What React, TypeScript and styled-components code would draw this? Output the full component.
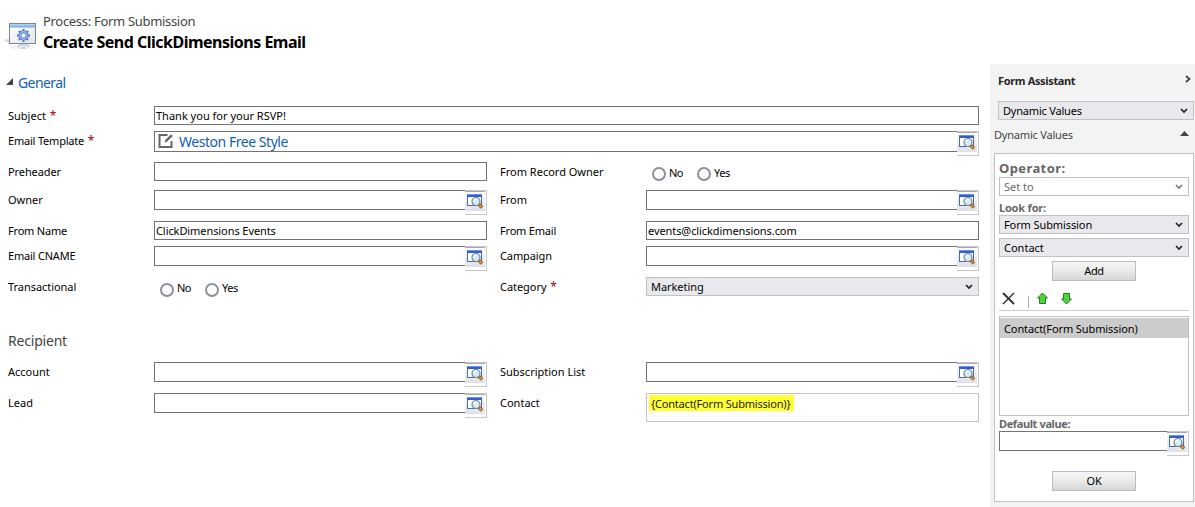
import React from "react";
import styled, { createGlobalStyle } from "styled-components";

const Global = createGlobalStyle`
  *, *::before, *::after { box-sizing: border-box; }
  html, body { margin: 0; padding: 0; background: #fff; overflow: hidden; }
  body { font-family: "Noto Sans", "Open Sans", sans-serif; font-size: 11px; color: #000; }
`;

const Page = styled.div`
  width: 1195px;
  height: 507px;
  display: flex;
  align-items: flex-start;
  overflow: hidden;
`;

const Main = styled.main`
  width: 990px;
  height: 507px;
  display: flex;
  flex-direction: column;
`;

const Header = styled.header`
  display: flex;
  gap: 4px;
  height: 64px;
  padding: 12px 0 0 4px;
`;

const HeaderIcon = styled.svg`
  width: 35px;
  height: 32px;
  margin-top: 9px;
`;

const Titles = styled.div`
  display: flex;
  flex-direction: column;
  white-space: nowrap;
`;

const Crumb = styled.div`
  font-size: 13px;
  line-height: 18px;
  letter-spacing: -0.31px;
  color: #444;
`;

const Title = styled.h1`
  margin: 0;
  font-size: 16px;
  line-height: 24px;
  font-weight: 700;
  letter-spacing: -0.5px;
  color: #000;
`;

const SectionHead = styled.div`
  display: flex;
  align-items: center;
  gap: 5px;
  height: 42px;
  padding: 0 0 6px 6px;
  font-size: 14px;
  letter-spacing: -0.6px;
  color: #1160b7;

  svg { margin-top: -2px; }
`;

const Recipient = styled.h2`
  margin: 0;
  height: 54px;
  padding: 23px 0 0 8px;
  font-size: 14px;
  line-height: 20px;
  font-weight: 400;
  letter-spacing: -0.2px;
  color: #444;
`;

const Row = styled.div<{ $h: number }>`
  display: flex;
  align-items: flex-start;
  height: ${(p) => p.$h}px;
  padding-left: 8px;
`;

const Label = styled.label<{ $ls?: number }>`
  flex: none;
  width: 146px;
  line-height: 20px;
  white-space: nowrap;
  letter-spacing: ${(p) => p.$ls ?? 0}px;
`;

const Star = styled.span`
  margin-left: 1px;
  font-size: 12px;
  line-height: 10px;
  color: #a00000;
`;

const Gap = styled.div`
  flex: none;
  width: 13px;
`;

const Box = styled.div<{ $w?: number; $ls?: number }>`
  flex: none;
  width: ${(p) => p.$w ?? 333}px;
  height: 19px;
  padding-left: 1px;
  border: 1px solid #737373;
  background: #fff;
  line-height: 18px;
  white-space: nowrap;
  letter-spacing: ${(p) => p.$ls ?? 0}px;
`;

const LookupWrap = styled.div<{ $w: number }>`
  flex: none;
  display: flex;
  align-items: flex-start;
  width: ${(p) => p.$w}px;
`;

const LookupInput = styled.div<{ $h: number }>`
  flex: 1;
  height: ${(p) => p.$h}px;
  display: flex;
  align-items: center;
  gap: 5px;
  padding-left: 3px;
  border: 1px solid #737373;
  border-right: 0;
  background: #fff;
  font-size: 14px;
  letter-spacing: -0.46px;
  color: #1160b7;
  white-space: nowrap;
`;

const LookupButton = styled.div`
  flex: none;
  width: 22px;
  height: 25px;
  padding: 0 1px 3px 0;
  border: 1px solid #c8c8c8;
  border-left: 0;
  background: #fff;

  > div {
    height: 20px;
    padding: 1px 0 0 2px;
    border-top: 1px solid #a8a8ac;
    background: linear-gradient(#fcfcff, #dfe0ea);
  }
  svg { display: block; }
`;

const ContactBox = styled.div`
  width: 333px;
  height: 29px;
  padding: 1px 2px;
  border: 1px solid #c4c4c8;

  span {
    display: block;
    width: 145px;
    height: 16px;
    padding-left: 2px;
    line-height: 17px;
    letter-spacing: -0.19px;
    white-space: nowrap;
    background: #ffff33;
    color: #222;
  }
`;

const Radios = styled.div<{ $top: number }>`
  display: flex;
  padding: ${(p) => p.$top}px 0 0 6px;
`;

const Radio = styled.div<{ $up: number }>`
  display: flex;
  gap: 3px;
  width: 45px;

  i {
    width: 14px;
    height: 14px;
    border: 2px solid #8f8f9d;
    border-radius: 50%;
  }
  span { margin-top: ${(p) => -p.$up}px; line-height: 14px; letter-spacing: -0.5px; }
`;

const SelectBox = styled.div<{ $plain?: boolean; $ls?: number }>`
  flex: none;
  display: flex;
  justify-content: space-between;
  align-items: center;
  height: 19px;
  padding: 0 5px 0 4px;
  border: 1px solid #c2c2c6;
  background: ${(p) => (p.$plain ? "#fff" : "#e9e9ed")};
  color: ${(p) => (p.$plain ? "#6d6d6d" : "#000")};
  line-height: 17px;
  white-space: nowrap;
  letter-spacing: ${(p) => p.$ls ?? 0}px;
`;

const WideSelect = styled(SelectBox)`
  width: 333px;
`;

const Aside = styled.aside`
  width: 205px;
  height: 443px;
  margin-top: 64px;
  padding: 0 1px 0 4px;
  background: #f3f3f3;
`;

const AsideTitle = styled.div`
  display: flex;
  justify-content: space-between;
  height: 37px;
  padding: 7px 3px 0 4px;
  font-weight: 700;
  line-height: 20px;
  letter-spacing: -0.35px;
  color: #262626;

  svg { margin-top: 4px; }
`;

const AsideSelect = styled(SelectBox)`
  margin-left: 4px;
`;

const AsideSub = styled.div`
  display: flex;
  justify-content: space-between;
  height: 33px;
  padding: 5px 5px 0 0;
  line-height: 20px;
  letter-spacing: -0.2px;
  color: #444;

  svg { margin-top: 6px; }
`;

const Panel = styled.div`
  display: flex;
  flex-direction: column;
  height: 349px;
  padding: 0 4px;
  border: 1px solid #c2c2c6;
  background: #fff;
`;

const Operator = styled.div`
  height: 23px;
  padding-top: 4px;
  font-size: 13px;
  line-height: 20px;
  font-weight: 700;
  letter-spacing: 0.4px;
  color: #666;
`;

const SmallHead = styled.div<{ $h: number; $ls: number }>`
  flex: none;
  height: ${(p) => p.$h}px;
  line-height: ${(p) => p.$h - 4}px;
  padding-top: ${(p) => (p.$h > 15 ? 4 : 2)}px;
  font-weight: 700;
  letter-spacing: ${(p) => p.$ls}px;
  color: #666;
`;

const Spacer = styled.div<{ $h: number }>`
  flex: none;
  height: ${(p) => p.$h}px;
`;

const Button = styled.div`
  flex: none;
  align-self: center;
  width: 84px;
  height: 20px;
  border: 1px solid #b9bcc2;
  background: linear-gradient(#f6f6f6 0%, #ececec 45%, #d6d6d6 100%);
  text-align: center;
  line-height: 18px;
  letter-spacing: -0.3px;
`;

const Tools = styled.div`
  flex: none;
  display: flex;
  align-items: flex-start;
  height: 30px;
  padding: 11px 0 0 3px;
  border-bottom: 1px solid #ccc;
`;

const Divider = styled.div`
  width: 1px;
  height: 12px;
  margin: 4px 8px 0 13px;
  background: #aaa;
`;

const List = styled.div`
  flex: none;
  height: 100px;
  padding-top: 1px;
  border: 1px solid #c2c2c6;

  div {
    height: 20px;
    padding-left: 4px;
    line-height: 21px;
    letter-spacing: -0.1px;
    background: #ccc;
    white-space: nowrap;
  }
`;

const LookupIcon = () => (
  <svg width="17" height="17" viewBox="0 0 17 17">
    <rect x="0.5" y="1.5" width="14" height="11" fill="#fff" stroke="#4a6da8" />
    <rect x="0" y="1" width="15" height="3" fill="#2f5fd0" />
    <rect x="0" y="1" width="15" height="1" fill="#6d93ea" />
    <circle cx="9" cy="8.500" r="4" fill="#d5ecf4" stroke="#75878f" strokeWidth="1.2" />
    <path d="M7 8a2.200 2.200 0 0 1 2-2" fill="none" stroke="#fff" strokeWidth="1.3" />
    <path d="M12 11.500l3 3" stroke="#8a5a20" strokeWidth="3.400" />
    <path d="M12.500 12l2 2" stroke="#f0a030" strokeWidth="1.700" />
  </svg>
);

const Chevron = ({ color = "#222" }: { color?: string }) => (
  <svg width="8" height="6" viewBox="0 0 8 6">
    <path d="M1 1l3 3 3-3" fill="none" stroke={color} strokeWidth="1.7" />
  </svg>
);

const Lookup = ({ w = 333, h = 20, children }: { w?: number; h?: number; children?: React.ReactNode }) => (
  <LookupWrap $w={w}>
    <LookupInput $h={h}>{children}</LookupInput>
    <LookupButton><div><LookupIcon /></div></LookupButton>
  </LookupWrap>
);

const YesNo = ({ top }: { top: number }) => (
  <Radios $top={top}>
    <Radio $up={top - 4}><i /><span>No</span></Radio>
    <Radio $up={top - 4}><i /><span>Yes</span></Radio>
  </Radios>
);

const teeth = [0, 45, 90, 135, 180, 225, 270, 315];

export default function App() {
  return (
    <Page>
      <Global />
      <Main>
        <Header>
          <HeaderIcon viewBox="0 0 35 32">
            <defs>
              <linearGradient id="bar" x1="0" y1="0" x2="0" y2="1">
                <stop offset="0" stopColor="#b4daf6" /><stop offset="1" stopColor="#6faade" />
              </linearGradient>
              <linearGradient id="pane" x1="0" y1="0" x2="1" y2="1">
                <stop offset="0" stopColor="#fff" /><stop offset="1" stopColor="#e2e5ea" />
              </linearGradient>
            </defs>
            <path d="M0 19l6-2v6z" fill="#ddd" />
            <path d="M7 24h24v4H7z" fill="#f4f4f6" />
            <rect x="5.5" y="2.5" width="26" height="20" fill="url(#pane)" stroke="#7d868c" />
            <rect x="6" y="3" width="25" height="3.5" fill="url(#bar)" />
            <g stroke="#5a7fc6" strokeWidth="2.2">
              {teeth.map((a) => <path key={a} d="M19.5 8v3" transform={`rotate(${a} 19.500 14.500)`} />)}
            </g>
            <circle cx="19.5" cy="14.5" r="3.7" fill="#eef3fc" stroke="#4a70bd" strokeWidth="2.8" />
            <circle cx="19.5" cy="14.5" r="3.7" fill="none" stroke="#9dbdf0" strokeWidth="1.4" />
            <path d="M14 26l2-2h7l2 2M17 27h5" fill="none" stroke="#b5c6e6" strokeWidth="1.6" />
          </HeaderIcon>
          <Titles>
            <Crumb>Process: Form Submission</Crumb>
            <Title>Create Send ClickDimensions Email</Title>
          </Titles>
        </Header>
        <SectionHead>
          <svg width="7" height="7" viewBox="0 0 7 7"><path d="M7 0v7H0z" fill="#444" /></svg>
          General
        </SectionHead>
        <Row $h={25}>
          <Label>Subject <Star>*</Star></Label>
          <Box $w={825}>Thank you for your RSVP!</Box>
        </Row>
        <Row $h={31}>
          <Label $ls={-0.2}>Email Template <Star>*</Star></Label>
          <Lookup w={825} h={21}>
            <svg width="16" height="17" viewBox="0 0 16 17">
              <path d="M9.5 2H1.5v12h12V8" fill="none" stroke="#666" strokeWidth="2" />
              <path d="M6.5 9.500l.8-2.600L13 1.200l1.800 1.800L9 8.700z" fill="#666" />
            </svg>
            Weston Free Style
          </Lookup>
        </Row>
        <Row $h={28}>
          <Label $ls={-0.1}>Preheader</Label>
          <Box />
          <Gap />
          <Label>From Record Owner</Label>
          <YesNo top={5} />
        </Row>
        <Row $h={31}>
          <Label>Owner</Label>
          <Lookup />
          <Gap />
          <Label>From</Label>
          <Lookup />
        </Row>
        <Row $h={25}>
          <Label $ls={-0.2}>From Name</Label>
          <Box $ls={-0.08}>ClickDimensions Events</Box>
          <Gap />
          <Label $ls={-0.2}>From Email</Label>
          <Box $ls={-0.08}>events@clickdimensions.com</Box>
        </Row>
        <Row $h={31}>
          <Label $ls={-0.2}>Email CNAME</Label>
          <Lookup />
          <Gap />
          <Label $ls={-0.1}>Campaign</Label>
          <Lookup />
        </Row>
        <Row $h={31}>
          <Label $ls={-0.05}>Transactional</Label>
          <LookupWrap $w={333}><YesNo top={6} /></LookupWrap>
          <Gap />
          <Label $ls={-0.05}>Category <Star>*</Star></Label>
          <WideSelect $ls={-0.05}>Marketing<Chevron /></WideSelect>
        </Row>
        <Recipient>Recipient</Recipient>
        <Row $h={31}>
          <Label>Account</Label>
          <Lookup />
          <Gap />
          <Label>Subscription List</Label>
          <Lookup />
        </Row>
        <Row $h={31}>
          <Label>Lead</Label>
          <Lookup />
          <Gap />
          <Label>Contact</Label>
          <ContactBox><span>{"{Contact(Form Submission)}"}</span></ContactBox>
        </Row>
      </Main>
      <Aside>
        <AsideTitle>
          Form Assistant
          <svg width="6" height="8" viewBox="0 0 6 8"><path d="M1 1l3.5 3L1 7" fill="none" stroke="#444" strokeWidth="1.8" /></svg>
        </AsideTitle>
        <AsideSelect $ls={-0.2}>Dynamic Values<Chevron /></AsideSelect>
        <AsideSub>
          Dynamic Values
          <svg width="9" height="5" viewBox="0 0 9 5"><path d="M4.5 0L9 5H0z" fill="#444" /></svg>
        </AsideSub>
        <Panel>
          <Operator>Operator:</Operator>
          <SelectBox $plain>Set to<Chevron color="#777" /></SelectBox>
          <SmallHead $h={19} $ls={-0.2}>Look for:</SmallHead>
          <SelectBox $ls={-0.1}>Form Submission<Chevron /></SelectBox>
          <Spacer $h={4} />
          <SelectBox>Contact<Chevron /></SelectBox>
          <Spacer $h={4} />
          <Button>Add</Button>
          <Tools>
            <svg width="13" height="13" viewBox="0 0 13 13">
              <path d="M1 1l11 11" stroke="#333" strokeWidth="2" />
              <path d="M12 1L1 12" stroke="#333" strokeWidth="1.5" />
            </svg>
            <Divider />
            <svg width="36" height="13" viewBox="0 0 36 13">
              <path d="M5.500 1l5 5H8.500v5.500H2.500V6H0.500z" fill="#4fd33c" stroke="#1f7d1d" />
              <path d="M29.500 12l-5-5H26.500V1.500h6V7h2z" fill="#4fd33c" stroke="#1f7d1d" />
            </svg>
          </Tools>
          <Spacer $h={5} />
          <List><div>Contact(Form Submission)</div></List>
          <SmallHead $h={15} $ls={-0.38}>Default value:</SmallHead>
          <Lookup w={190} />
          <Spacer $h={15} />
          <Button>OK</Button>
        </Panel>
      </Aside>
    </Page>
  );
}
